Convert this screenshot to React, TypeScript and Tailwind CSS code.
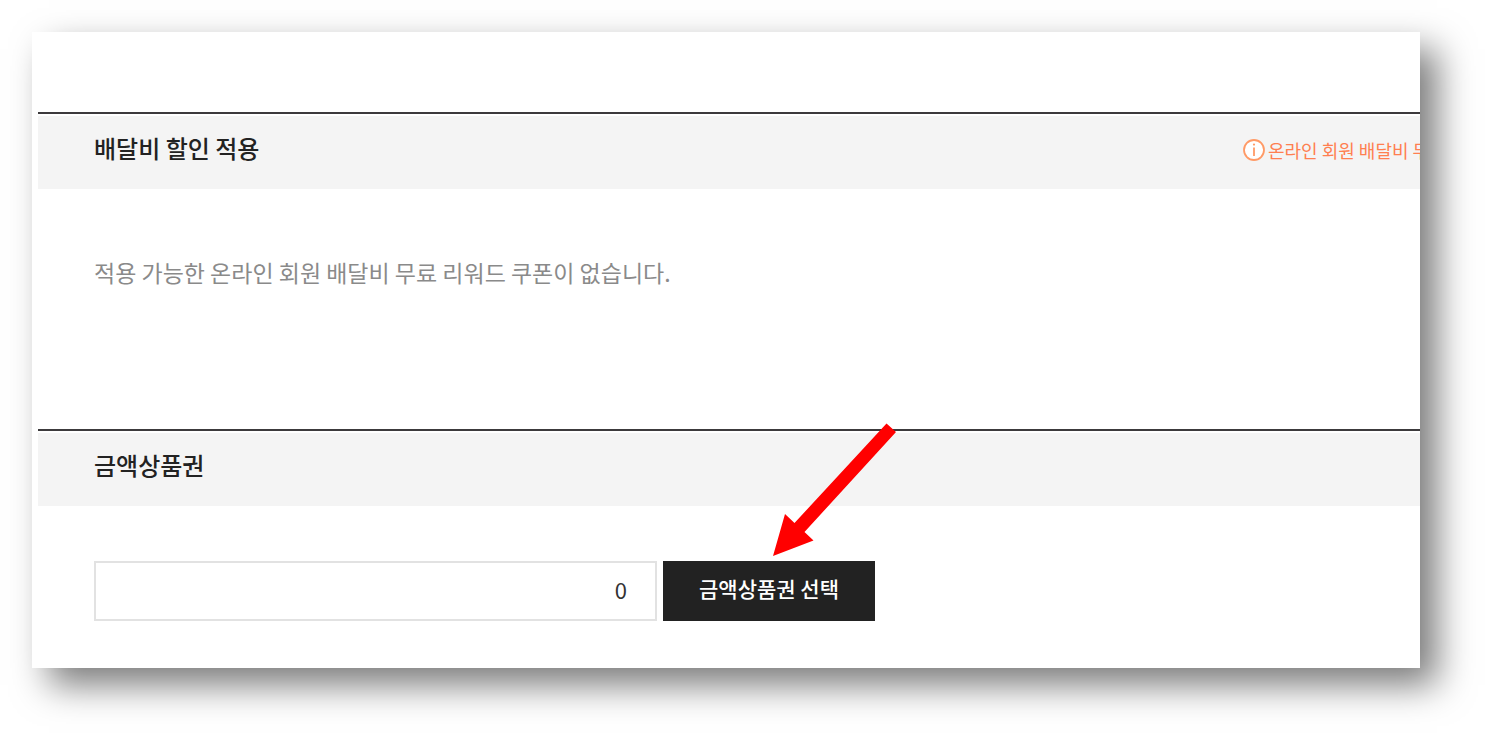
import React, { useState } from 'react';

interface SectionProps {
  title: string;
  notice?: React.ReactNode;
  className?: string;
  children: React.ReactNode;
}

const InfoIcon = ({ className }: { className?: string }) => (
  <svg viewBox="0 0 22 22" fill="none" className={className} aria-hidden="true">
    <circle cx="11" cy="11" r="10" fill="#fff" stroke="#ff9a66" strokeWidth="1.8" />
    <path d="M11 8.5v8.5" stroke="#ff9a66" strokeWidth="1.8" />
    <circle cx="11" cy="5.6" r="1.1" fill="#ff9a66" />
  </svg>
);

const PointerArrow = ({ className }: { className?: string }) => (
  <svg viewBox="0 0 123 133" className={className} aria-hidden="true">
    <polygon points="0,133 12,91 21.5,100 113.5,0.5 123,9 31.5,109 40.5,117.5" fill="#ff0000" />
  </svg>
);

const Section = ({ title, notice, className = '', children }: SectionProps) => (
  <section className={`border-t-2 border-[#3c3a3c] pt-0.5 ${className}`}>
    <header className="flex items-center justify-between bg-[#f4f4f4] pl-14 pt-4 pb-[25px]">
      <h2 className="text-2xl font-medium text-[#222]">{title}</h2>
      {notice}
    </header>
    {children}
  </section>
);

export default function App() {
  const [amount, setAmount] = useState('0');

  return (
    <div className="min-h-screen bg-white pt-8 pb-16 pl-8 pr-[65px] font-['Noto_Sans_CJK_KR',sans-serif]">
      <main className="bg-white pt-20 pl-1.5 pb-[47px] shadow-[17px_17px_34px_rgba(0,0,0,0.52)]">
        <Section
          title="배달비 할인 적용"
          className="pb-[141px]"
          notice={
            <p className="flex w-[177px] shrink-0 items-center gap-[3px] overflow-hidden whitespace-nowrap pt-1 text-lg leading-7 text-[#ff7f50]">
              <InfoIcon className="size-[22px] shrink-0" />
              <span>온라인 회원 배달비 무료</span>
            </p>
          }
        >
          <p className="pl-14 pt-[67px] text-[23px] leading-8 text-[#8a8a8a]">
            적용 가능한 온라인 회원 배달비 무료 리워드 쿠폰이 없습니다.
          </p>
        </Section>

        <Section title="금액상품권">
          <div className="flex gap-1.5 pl-14 pt-[55px]">
            <input
              type="text"
              aria-label="금액상품권"
              value={amount}
              onChange={(e) => setAmount(e.target.value)}
              className="h-[60px] w-[563px] border-2 border-[#e2e2e2] bg-white px-7 pb-1 text-right text-[22px] text-[#333] outline-none focus:border-[#999]"
            />
            <div className="relative">
              <button type="button" className="h-[60px] bg-[#222] px-9 pb-1 text-[21px] font-medium text-white hover:bg-black">
                금액상품권 선택
              </button>
              <PointerArrow className="pointer-events-none absolute bottom-full left-[110px] mb-[5px] h-[133px] w-[123px]" />
            </div>
          </div>
        </Section>
      </main>
    </div>
  );
}
